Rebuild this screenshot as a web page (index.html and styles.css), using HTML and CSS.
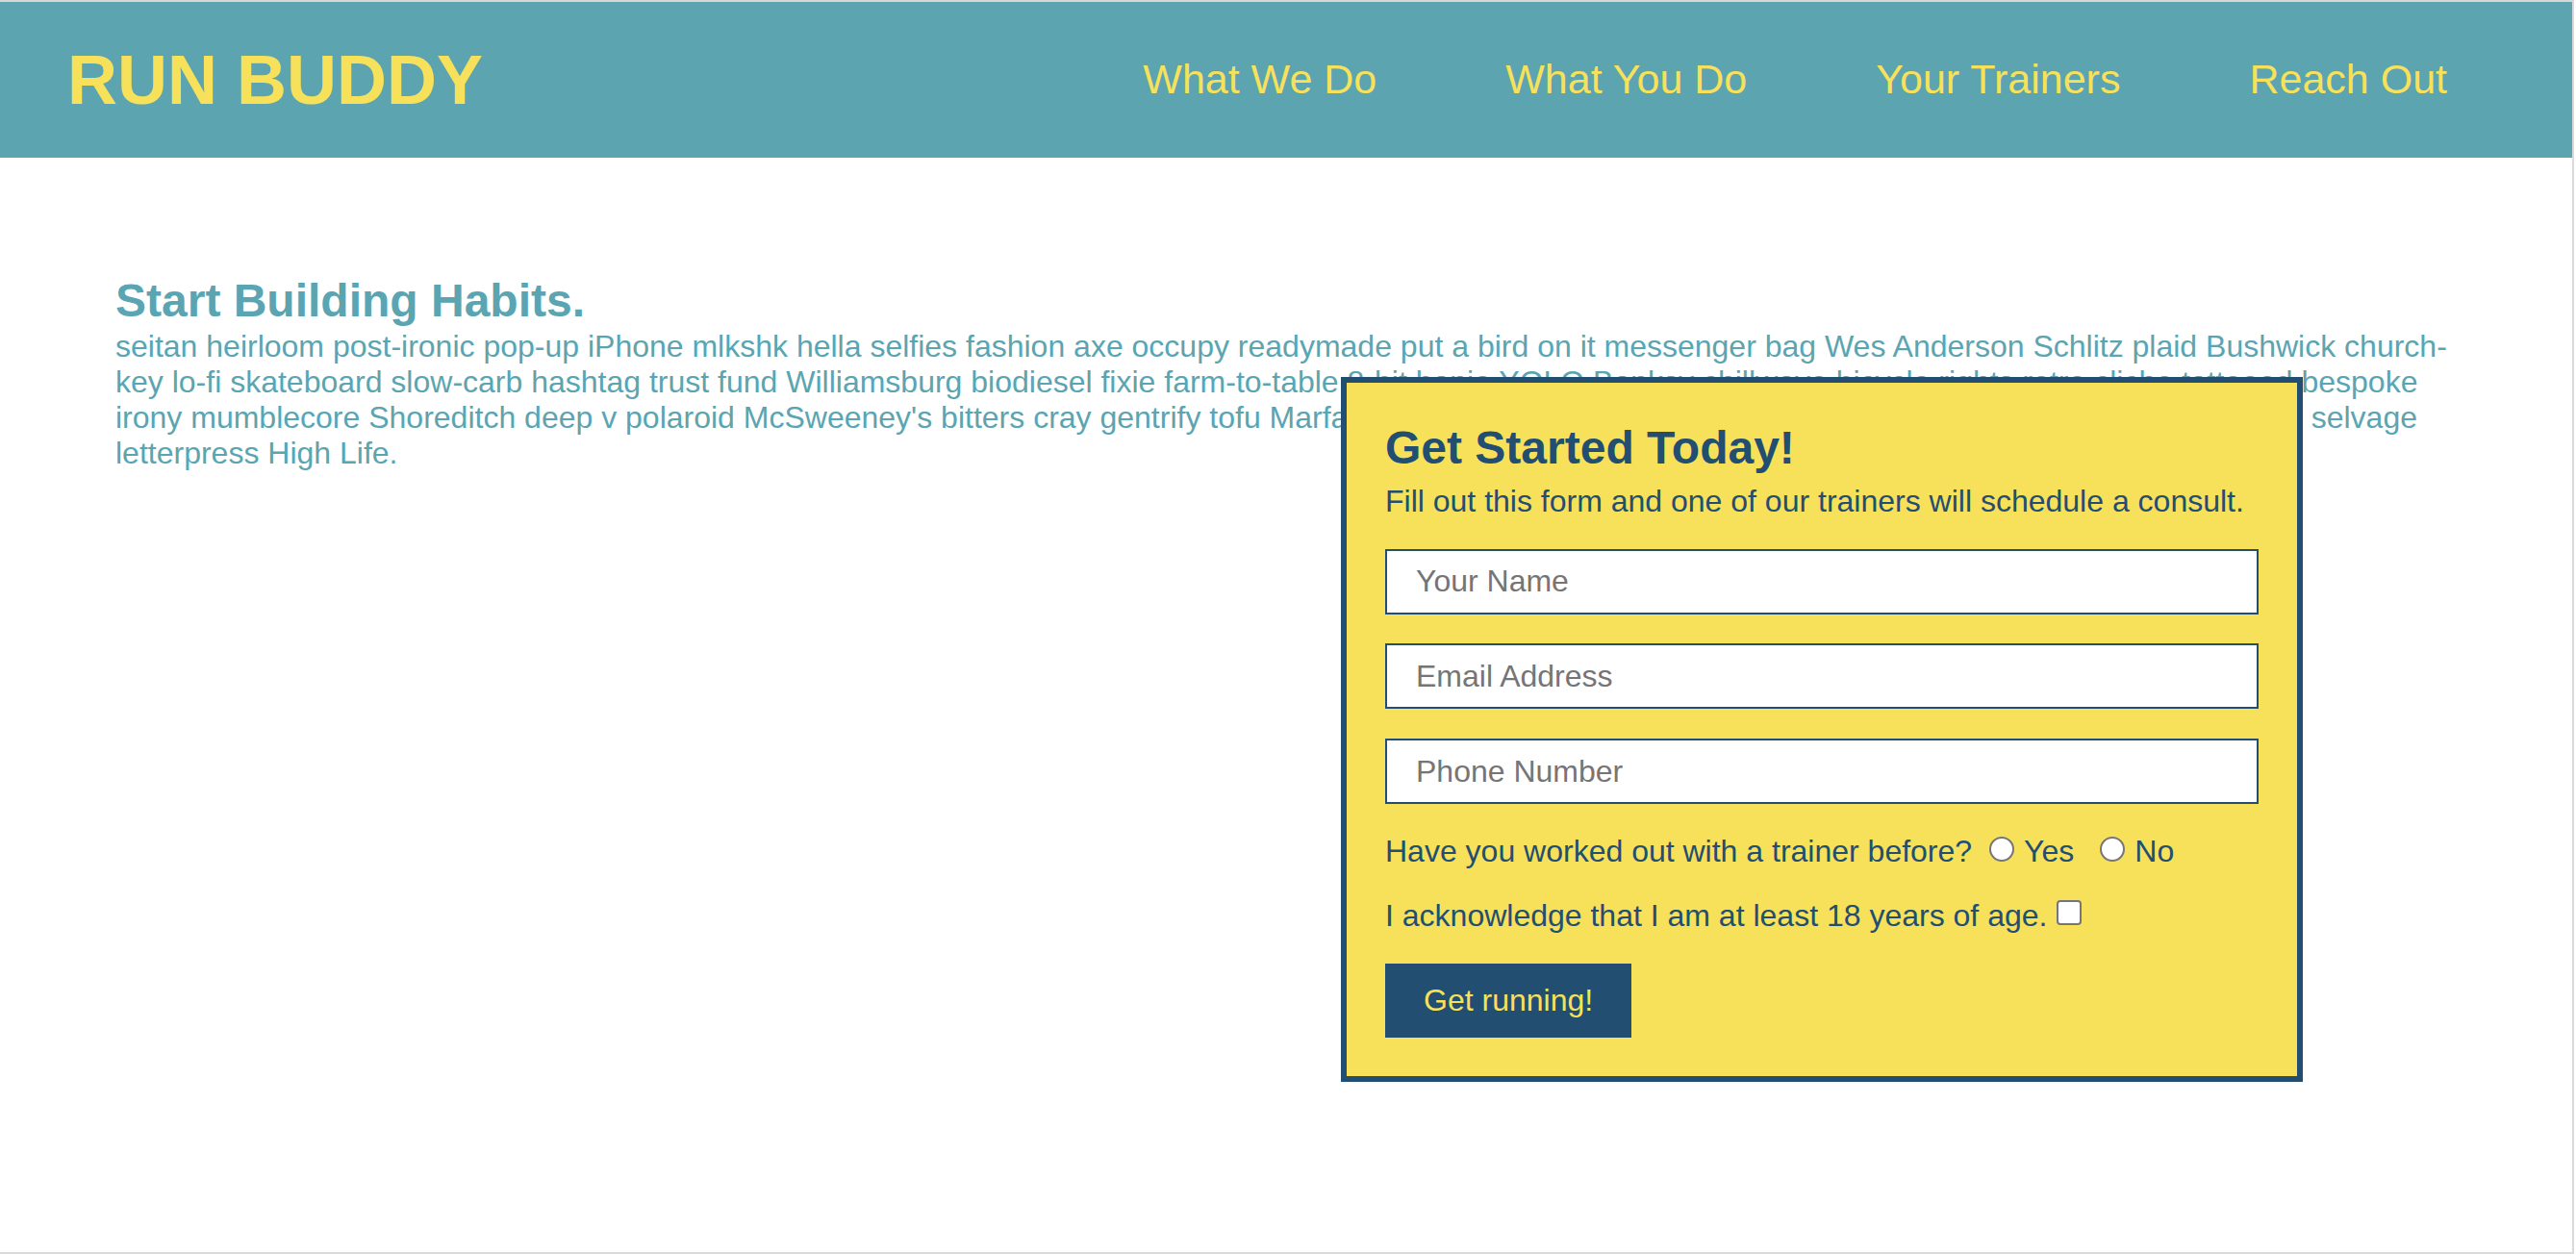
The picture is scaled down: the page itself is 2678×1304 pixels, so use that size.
FILE: index.html
```html
<!DOCTYPE html>
<html lang="en">
<head>
<meta charset="utf-8">
<title>Run Buddy</title>
<link rel="stylesheet" href="styles.css">
</head>
<body>
<div class="page">
  <header class="site-header">
    <h1 class="logo">RUN BUDDY</h1>
    <nav class="nav">
      <a href="#what-we-do">What We Do</a>
      <a href="#what-you-do">What You Do</a>
      <a href="#your-trainers">Your Trainers</a>
      <a href="#reach-out">Reach Out</a>
    </nav>
  </header>
  <main class="content">
    <section class="habits">
      <h2 class="habits-title">Start Building Habits.</h2>
      <p class="habits-text">seitan heirloom post-ironic pop-up iPhone mlkshk hella selfies fashion axe occupy readymade put a bird on it messenger bag Wes Anderson Schlitz plaid Bushwick church-key lo-fi skateboard slow-carb hashtag trust fund Williamsburg biodiesel fixie farm-to-table 8-bit banjo YOLO Banksy chillwave bicycle rights retro cliche tattooed bespoke irony mumblecore Shoreditch deep v polaroid McSweeney's bitters cray gentrify tofu Marfa Tumblr photo booth art party direct trade PBR&amp;B Pinterest Kickstarter selvage letterpress High Life.</p>
    </section>
    <form class="hero-form">
      <div class="form-intro">
        <h2 class="form-title">Get Started Today!</h2>
        <p class="form-text">Fill out this form and one of our trainers will schedule a consult.</p>
      </div>
      <input class="field" type="text" placeholder="Your Name">
      <input class="field" type="text" placeholder="Email Address">
      <input class="field" type="text" placeholder="Phone Number">
      <div class="form-line"><span>Have you worked out with a trainer before?</span><input class="radio radio-first" type="radio" name="trainer" id="yes"><label for="yes">Yes</label><input class="radio radio-second" type="radio" name="trainer" id="no"><label for="no">No</label></div>
      <div class="form-line"><label for="age">I acknowledge that I am at least 18 years of age.</label><input class="check" type="checkbox" id="age"></div>
      <button class="submit" type="button">Get running!</button>
    </form>
  </main>
</div>
</body>
</html>
```
FILE: styles.css
```css
html, body {
  margin: 0;
  padding: 0;
  background: #ffffff;
}

body {
  font-family: "Liberation Sans", Arial, Helvetica, sans-serif;
}

.page {
  width: 2674px;
  height: 1300px;
  border-top: 2px solid #d7d7d7;
  border-right: 2px solid #dadada;
  border-bottom: 2px solid #dadada;
  overflow: hidden;
}

.site-header {
  display: flex;
  justify-content: space-between;
  align-items: flex-start;
  padding: 40px 130px 40px 70px;
  background: #5ba4b0;
}

.logo {
  margin: 0;
  font-size: 72px;
  font-weight: 700;
  line-height: normal;
  color: #f7e15b;
}

.nav {
  display: flex;
  gap: 134px;
  margin-top: 16px;
}

.nav a {
  font-size: 43px;
  line-height: normal;
  color: #f7e15b;
  text-decoration: none;
}

.content {
  position: relative;
  padding: 121px 120px 0;
}

.habits-title {
  margin: 0;
  font-size: 48px;
  font-weight: 700;
  line-height: normal;
  color: #5aa5b1;
}

.habits-text {
  margin: 2px 0 0;
  font-size: 32px;
  line-height: normal;
  color: #5aa5b1;
}

.hero-form {
  position: absolute;
  left: 1394px;
  top: 228px;
  width: 1000px;
  box-sizing: border-box;
  padding: 40px;
  border: 6px solid #224e72;
  background: #f7e15b;
  display: flex;
  flex-direction: column;
  gap: 30.7px;
}

.form-title {
  margin: 0;
  font-size: 48px;
  font-weight: 700;
  line-height: normal;
  color: #224e72;
}

.form-text {
  margin: 10px 0 0;
  font-size: 32px;
  line-height: normal;
  color: #224e72;
}

.field {
  display: block;
  width: 100%;
  height: 68px;
  box-sizing: border-box;
  margin: 0;
  padding: 0 30px;
  border: 2px solid #224e72;
  border-radius: 0;
  background: #ffffff;
  font-family: "Liberation Sans", Arial, Helvetica, sans-serif;
  font-size: 32px;
  color: #224e72;
  outline: none;
}

.field::placeholder {
  color: #757575;
}

.form-line {
  font-size: 32px;
  line-height: normal;
  color: #224e72;
}

.radio {
  appearance: none;
  -webkit-appearance: none;
  display: inline-block;
  width: 26px;
  height: 26px;
  box-sizing: border-box;
  margin: 0 10px 0 0;
  border: 2px solid #767676;
  border-radius: 50%;
  background: #ffffff;
  vertical-align: baseline;
}

.radio-first {
  margin-left: 18px;
}

.radio-second {
  margin-left: 27px;
}

.check {
  appearance: none;
  -webkit-appearance: none;
  display: inline-block;
  width: 26px;
  height: 26px;
  box-sizing: border-box;
  margin: 0 0 1px 10px;
  border: 2px solid #767676;
  border-radius: 4px;
  background: #ffffff;
  vertical-align: baseline;
}

.submit {
  align-self: flex-start;
  margin: 0;
  padding: 20px 40px;
  border: none;
  border-radius: 0;
  background: #224e72;
  color: #f7e15b;
  font-family: "Liberation Sans", Arial, Helvetica, sans-serif;
  font-size: 32px;
  line-height: normal;
}
```
